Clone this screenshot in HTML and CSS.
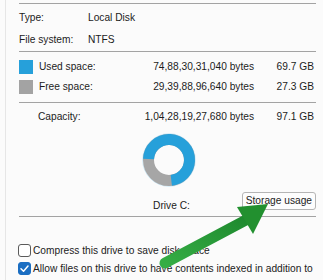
FILE: index.html
```html
<!DOCTYPE html>
<html>
<head>
<meta charset="utf-8">
<link rel="stylesheet" href="styles.css">
</head>
<body>
<div class="page">
  <div class="panel">
    <div class="sep first"></div>
    <div class="row info top"><span class="k">Type:</span><span class="v">Local Disk</span></div>
    <div class="row info"><span class="k">File system:</span><span class="v">NTFS</span></div>
    <div class="sep"></div>
    <div class="row space used">
      <span class="swatch blue"></span><span class="lbl">Used space:</span>
      <span class="bytes">74,88,30,31,040 bytes</span><span class="gb">69.7 GB</span>
    </div>
    <div class="row space free">
      <span class="swatch grey"></span><span class="lbl">Free space:</span>
      <span class="bytes">29,39,88,96,640 bytes</span><span class="gb">27.3 GB</span>
    </div>
    <div class="sep third"></div>
    <div class="row space cap">
      <span class="lbl caplbl">Capacity:</span>
      <span class="bytes">1,04,28,19,27,680 bytes</span><span class="gb">97.1 GB</span>
    </div>
    <div class="donut-wrap">
      <svg class="donut" width="56" height="56" viewBox="0 0 56 56">
        <circle cx="28" cy="28" r="26.3" fill="none" stroke="#cfeaf8" stroke-width="1"/>
        <circle cx="28" cy="28" r="20.5" fill="none" stroke="#a6a6a6" stroke-width="11"/>
        <circle cx="28" cy="28" r="20.5" fill="none" stroke="#26a0da" stroke-width="11" stroke-dasharray="92.5 200" transform="rotate(183 28 28)"/>
      </svg>
    </div>
    <div class="drive-row">
      <span></span>
      <span class="drive">Drive C:</span>
      <span class="btn">Storage usage</span>
    </div>
    <div class="sep"></div>
    <div class="checks">
      <label class="chk"><span class="box"></span><span>Compress this drive to save disk space</span></label>
      <label class="chk"><span class="box on"><svg width="13" height="13" viewBox="0 0 13 13"><path d="M3 6.8 L5.5 9.2 L10 4" fill="none" stroke="#fff" stroke-width="1.5" stroke-linecap="round" stroke-linejoin="round"/></svg></span><span>Allow files on this drive to have contents indexed in addition to</span></label>
    </div>
  </div>
  <svg class="arrow" width="323" height="280" viewBox="0 0 323 280">
    <defs>
      <linearGradient id="g" x1="0" y1="1" x2="1" y2="0">
        <stop offset="0" stop-color="#35ad45"/>
        <stop offset="1" stop-color="#1f8a2f"/>
      </linearGradient>
    </defs>
    <line x1="165" y1="263" x2="246" y2="220" stroke="url(#g)" stroke-width="11" stroke-linecap="round"/>
    <polygon points="237,207 253,234 268,204" fill="#22902f"/>
  </svg>
</div>
</body>
</html>
```

FILE: styles.css
```css
* { box-sizing: border-box; }
html, body { margin: 0; padding: 0; }
body {
  width: 323px;
  height: 280px;
  overflow: hidden;
  background: #fbfbfb;
  font-family: "Liberation Sans", Arial, sans-serif;
  font-size: 10.2px;
  line-height: 12px;
  color: #1c1c1c;
}
.page {
  position: relative;
  width: 318px;
  height: 280px;
  border-left: 1px solid #e6e6e6;
  margin-left: 5px;
  padding-left: 13px;
}
.panel {
  width: 297px;
  display: flex;
  flex-direction: column;
}
.sep {
  height: 1px;
  flex: none;
  background: #a3a3a3;
}
.sep.first { margin-top: 3px; }
.sep.third { margin-top: 5px; }
.row {
  display: flex;
  align-items: center;
  white-space: nowrap;
}
.info { height: 22px; }
.info.top { margin-top: 3px; }
.info .k { width: 69px; }
.space { height: 20px; padding-right: 2px; }
.used { margin-top: 5px; }
.cap { margin-top: 3px; height: 22px; }
.swatch { width: 14px; height: 14px; margin-right: 6px; flex: none; }
.swatch.blue { background: #26a0da; }
.swatch.grey { background: #a3a3a3; }
.lbl { flex: 1; }
.caplbl { padding-left: 19px; }
.bytes { width: 110px; text-align: right; }
.gb { width: 60px; text-align: right; }
.donut-wrap {
  display: flex;
  justify-content: center;
  margin-top: 4px;
  padding-left: 2px;
}
.donut { display: block; }
.drive-row {
  display: grid;
  grid-template-columns: 1fr auto 1fr;
  height: 28px;
}
.drive { align-self: end; padding-bottom: 4px; padding-left: 8px; }
.btn {
  justify-self: end;
  align-self: start;
  margin-top: 4px;
  height: 18px;
  line-height: 16px;
  padding: 0 3px;
  background: #fdfdfd;
  border: 1px solid #b5b5b5;
  border-radius: 3px;
}
.checks {
  margin-top: 27px;
  display: flex;
  flex-direction: column;
  gap: 5px;
}
.chk {
  display: flex;
  align-items: center;
  height: 13px;
  gap: 2px;
  white-space: nowrap;
  margin-left: -1px;
}
.box {
  width: 13px;
  height: 13px;
  border: 1px solid #5a5a5a;
  border-radius: 3px;
  background: #fff;
  flex: none;
}
.box.on {
  background: #1b6ec2;
  border-color: #1b6ec2;
  position: relative;
}
.box.on svg { position: absolute; left: -1px; top: -1px; }
.arrow {
  position: absolute;
  left: -6px;
  top: 0;
  pointer-events: none;
}
```
